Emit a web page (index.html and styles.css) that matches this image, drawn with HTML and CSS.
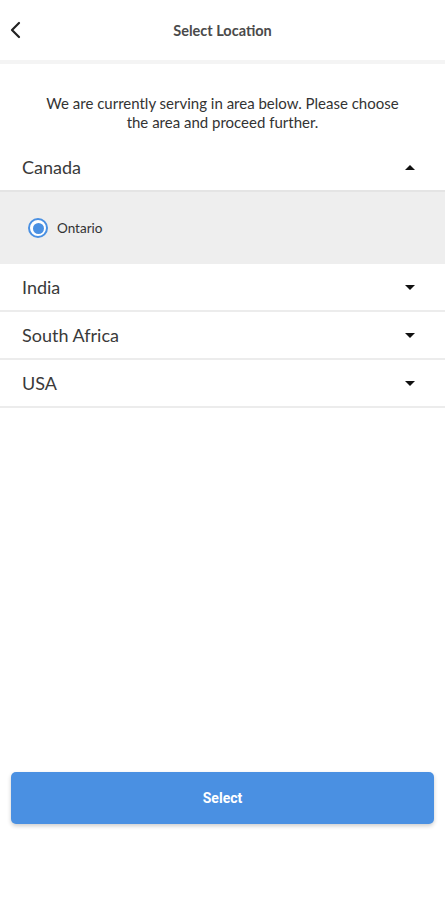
FILE: index.html
```html
<!DOCTYPE html>
<html lang="en">
<head>
    <meta charset="UTF-8">
    <meta name="viewport" content="width=device-width, initial-scale=1.0">
    <title>Select Location</title>
    <link rel="stylesheet" href="styles.css">
</head>
<body>

    <div class="screen">
        <!-- Top bar -->
        <div class="topbar">
            <svg class="back" width="14" height="18" viewBox="0 0 14 18">
                <path d="M10 2 L3 9 L10 16" fill="none" stroke="#222" stroke-width="2.2" stroke-linecap="round" stroke-linejoin="round"/>
            </svg>
            <div class="title">Select Location</div>
        </div>

        <p class="intro">We are currently serving in area below. Please choose the area and proceed further.</p>

        <!-- Country list -->
        <div class="country open">
            <div class="country-head">
                <span>Canada</span>
                <span class="caret up"></span>
            </div>
            <div class="areas">
                <label class="area">
                    <span class="radio checked"></span>
                    Ontario
                </label>
            </div>
        </div>

        <div class="country">
            <div class="country-head">
                <span>India</span>
                <span class="caret"></span>
            </div>
        </div>

        <div class="country">
            <div class="country-head">
                <span>South Africa</span>
                <span class="caret"></span>
            </div>
        </div>

        <div class="country">
            <div class="country-head">
                <span>USA</span>
                <span class="caret"></span>
            </div>
        </div>

        <div class="spacer"></div>

        <div class="footer">
            <button class="select-btn">Select</button>
        </div>
    </div>

</body>
</html>
```

FILE: styles.css
```css
/* Page */
body {
    margin: 0;
    background: #fff;
    font-family: 'Lato', 'Noto Sans', sans-serif;
    color: #333;
}

.screen {
    display: flex;
    flex-direction: column;
    height: 900px;
}

/* Top bar */
.topbar {
    height: 60px;
    display: flex;
    align-items: center;
    position: relative;
    border-bottom: 4px solid #f4f4f4;
}

.back {
    margin-left: 9px;
}

.title {
    position: absolute;
    left: 0;
    right: 0;
    text-align: center;
    font-size: 14.5px;
    font-weight: bold;
    color: #4a4a4a;
    pointer-events: none;
}

/* Intro text */
.intro {
    margin: 30px 0 12px;
    padding: 0 40px;
    text-align: center;
    font-size: 15px;
    line-height: 19px;
    color: #333;
}

/* Country rows */
.country {
    border-bottom: 2px solid #ececec;
}

.country.open {
    border-bottom: none;
}

.country-head {
    height: 46px;
    display: flex;
    align-items: center;
    justify-content: space-between;
    padding: 0 30px 0 22px;
    font-size: 18px;
    color: #3a3a3a;
}

.caret {
    width: 0;
    height: 0;
    border-left: 5px solid transparent;
    border-right: 5px solid transparent;
    border-top: 5px solid #111;
}

.caret.up {
    border-top: none;
    border-bottom: 5px solid #111;
}

/* Expanded area list */
.areas {
    background: #eeeeee;
    border-top: 2px solid #e4e4e4;
    height: 72px;
    display: flex;
    align-items: center;
    padding-left: 28px;
}

.area {
    display: flex;
    align-items: center;
    gap: 9px;
    font-size: 13.5px;
    color: #333;
}

.radio {
    width: 16px;
    height: 16px;
    border-radius: 50%;
    border: 2px solid #4a90e2;
    box-sizing: content-box;
    display: flex;
    align-items: center;
    justify-content: center;
    background: #fff;
}

.radio.checked::after {
    content: "";
    width: 11px;
    height: 11px;
    border-radius: 50%;
    background: #4a90e2;
}

.spacer {
    flex: 1;
}

/* Bottom button */
.footer {
    padding: 0 11px 76px;
}

.select-btn {
    width: 100%;
    height: 52px;
    border: none;
    border-radius: 5px;
    background: #4a90e2;
    color: #fff;
    font-family: 'Roboto', sans-serif;
    font-size: 14px;
    font-weight: bold;
    box-shadow: 0 2px 4px rgba(0, 0, 0, 0.2);
}
```
